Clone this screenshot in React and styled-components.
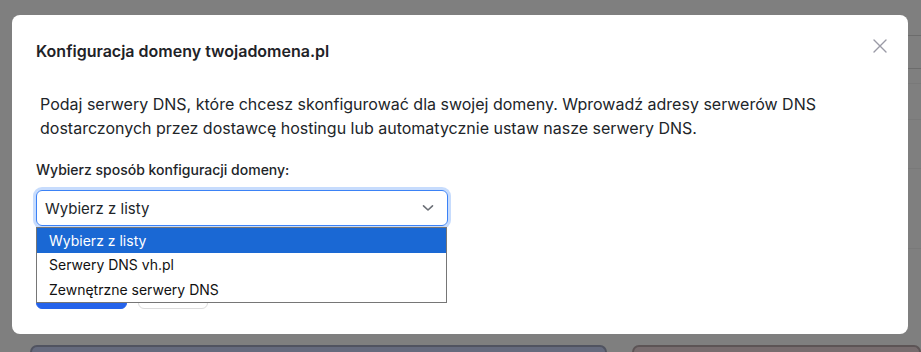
import React from "react";
import styled, { createGlobalStyle } from "styled-components";

const GlobalStyle = createGlobalStyle`
  html, body {
    margin: 0;
    padding: 0;
  }
  body {
    font-family: Inter, "Noto Sans", "Liberation Sans", sans-serif;
    color: #212529;
  }
`;

const Page = styled.div`
  position: relative;
  width: 921px;
  height: 352px;
  overflow: hidden;
  background: #ffffff;
  display: flex;
  flex-direction: column;
`;

const TopArea = styled.div`
  height: 345px;
  display: grid;
  grid-template-columns: 1fr 50px;
`;

const SideColumn = styled.div`
  padding-top: 35px;
  display: flex;
  flex-direction: column;
`;

const SideButton = styled.div`
  margin-left: 17px;
  width: 60px;
  height: 34px;
  border: 1px solid #d8d8d8;
  border-radius: 6px;
  box-sizing: border-box;
`;

const SideRow = styled.div`
  height: ${(p) => p.h}px;
  border-bottom: 1px solid #f2f2f2;
  box-sizing: border-box;
`;

const BottomRow = styled.div`
  display: flex;
  gap: 25px;
  padding-left: 30px;
  flex: 1;
`;

const Card = styled.div`
  flex: ${(p) => (p.grow ? 1 : "none")};
  width: ${(p) => (p.grow ? "auto" : "577px")};
  background: ${(p) => p.bg};
  border: 2px solid ${(p) => p.bd};
  border-bottom: none;
  border-radius: 8px 8px 0 0;
  box-sizing: border-box;
`;

const Overlay = styled.div`
  position: absolute;
  inset: 0;
  background: rgba(0, 0, 0, 0.5);
`;

const Modal = styled.div`
  position: absolute;
  left: 12px;
  top: 15px;
  width: 896px;
  height: 319px;
  background: #ffffff;
  border-radius: 8px;
  padding: 24px 24px;
  box-sizing: border-box;
`;

const Header = styled.div`
  display: flex;
  justify-content: space-between;
  align-items: flex-start;
  height: 30px;
`;

const Title = styled.h5`
  margin: 1px 0 0;
  font-size: 16px;
  font-weight: 600;
  line-height: 22px;
  color: #1f2328;
`;

const CloseButton = styled.button`
  border: none;
  background: none;
  padding: 0;
  margin: -3px -6px 0 0;
  width: 20px;
  height: 20px;
  display: flex;
  align-items: center;
  justify-content: center;
  cursor: pointer;
`;

const Text = styled.p`
  margin: 24px 0 0;
  padding: 0 4px;
  font-size: 16px;
  line-height: 23.5px;
  color: #212529;
`;

const Label = styled.label`
  display: block;
  margin-top: 20px;
  font-size: 14px;
  font-weight: 500;
  line-height: 20px;
  color: #212529;
`;

const SelectWrap = styled.div`
  position: relative;
  margin-top: 10px;
  width: 412px;
`;

const SelectBox = styled.div`
  height: 36px;
  border: 1px solid #3b82f6;
  border-radius: 6px;
  box-shadow: 0 0 0 3px #c7dcfd;
  box-sizing: border-box;
  display: flex;
  align-items: center;
  justify-content: space-between;
  padding: 0 13px 0 8px;
  font-size: 15px;
  color: #212529;
`;

const OptionList = styled.ul`
  position: absolute;
  top: 37px;
  left: 0;
  width: 411px;
  margin: 0;
  padding: 0;
  list-style: none;
  background: #ffffff;
  border: 1px solid #767676;
  box-sizing: border-box;
  z-index: 2;
`;

const Option = styled.li`
  height: ${(p) => (p.active ? 25 : 24.5)}px;
  line-height: ${(p) => (p.active ? 25 : 24.5)}px;
  padding-left: 12px;
  font-size: 14px;
  background: ${(p) => (p.active ? "#1a68d4" : "transparent")};
  color: ${(p) => (p.active ? "#ffffff" : "#111111")};
`;

const Actions = styled.div`
  display: flex;
  gap: 11px;
  margin-top: 45px;
`;

const Button = styled.button`
  height: 38px;
  border-radius: 6px;
  padding: 0;
  box-sizing: border-box;
  width: ${(p) => p.w}px;
  background: ${(p) => (p.primary ? "#2563eb" : "#ffffff")};
  border: 1px solid ${(p) => (p.primary ? "#2563eb" : "#dcdcdc")};
`;

function Chevron() {
  return (
    <svg width="12" height="8" viewBox="0 0 12 8" fill="none">
      <path d="M1.5 1.8 L6 6 L10.5 1.8" stroke="#6b6f76" strokeWidth="1.6" strokeLinecap="round" strokeLinejoin="round" />
    </svg>
  );
}

function CloseIcon() {
  return (
    <svg width="14" height="14" viewBox="0 0 14 14" fill="none">
      <path d="M1 1 L13 13 M13 1 L1 13" stroke="#9a9aa6" strokeWidth="1.4" strokeLinecap="round" />
    </svg>
  );
}

export default function App() {
  return (
    <>
      <GlobalStyle />
      <Page>
        <TopArea>
          <div />
          <SideColumn>
            <SideButton />
            <SideRow h={15} />
            <SideRow h={36} />
            <SideRow h={49} />
            <SideRow h={80} />
          </SideColumn>
        </TopArea>
        <BottomRow>
          <Card bg="#cad4fa" bd="#a0a6c0" />
          <Card grow bg="#eed8dc" bd="#b8a8ab" />
        </BottomRow>
        <Overlay />
        <Modal>
          <Header>
            <Title>Konfiguracja domeny twojadomena.pl</Title>
            <CloseButton aria-label="Zamknij">
              <CloseIcon />
            </CloseButton>
          </Header>
          <Text>
            Podaj serwery DNS, które chcesz skonfigurować dla swojej domeny. Wprowadź adresy serwerów DNS
            dostarczonych przez dostawcę hostingu lub automatycznie ustaw nasze serwery DNS.
          </Text>
          <Label>Wybierz sposób konfiguracji domeny:</Label>
          <SelectWrap>
            <SelectBox>
              <span>Wybierz z listy</span>
              <Chevron />
            </SelectBox>
            <OptionList>
              <Option active>Wybierz z listy</Option>
              <Option>Serwery DNS vh.pl</Option>
              <Option>Zewnętrzne serwery DNS</Option>
            </OptionList>
          </SelectWrap>
          <Actions>
            <Button primary w={91} aria-label="Zapisz" />
            <Button w={70} aria-label="Anuluj" />
          </Actions>
        </Modal>
      </Page>
    </>
  );
}
